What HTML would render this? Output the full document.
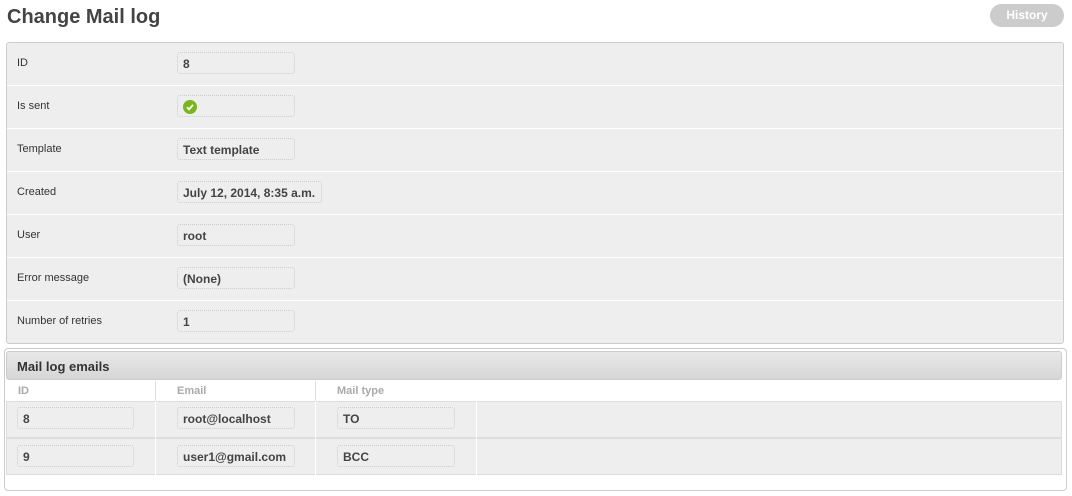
<!DOCTYPE html><html><head><style>
body{margin:0;width:1072px;height:496px;background:#fff;font-family:"Liberation Sans",Arial,sans-serif;position:relative;overflow:hidden;color:#333}
.a{position:absolute}
h1{position:absolute;left:7px;top:6px;margin:0;font-size:20px;font-weight:bold;color:#444}
.hist{left:990px;top:4px;width:74px;height:23px;border-radius:12px;background:#ccc;color:#fff;font-size:12px;font-weight:bold;text-align:center;line-height:23px}
.fs{left:6px;top:42px;width:1056px;height:300px;border:1px solid #ccc;border-radius:3px;background:#eee}
.row{position:absolute;left:0;width:1056px;height:42px;border-bottom:1px solid #fff}
.row .l{position:absolute;left:10px;top:14px;font-size:11px;color:#333}
.box{position:absolute;height:22px;border:1px dotted #ccc;border-radius:3px;font-size:12px;font-weight:bold;color:#444;line-height:22px;padding-left:5px;box-sizing:border-box}
.row .box{left:170px;top:9px;width:118px}
.grp{left:4px;top:348px;width:1061px;height:141px;border:1px solid #ccc;border-radius:4px}
.hd{left:6px;top:351px;width:1056px;height:29px;border:1px solid #ccc;border-radius:3px;background:linear-gradient(#e8e8e8,#d6d6d6);font-size:13px;font-weight:bold;color:#333;line-height:29px;padding-left:10px;box-sizing:border-box}
.ch{font-size:11px;font-weight:bold;color:#aaa;top:385px}
.tr{left:6px;width:1056px;height:37px;background:#eee;border:1px solid #ddd;box-sizing:border-box}
.sep{width:1px;background:#ddd}
</style></head><body>
<h1>Change Mail log</h1>
<div class="a hist">History</div>
<div class="a fs">
<div class="row" style="top:0"><span class="l">ID</span><div class="box">8</div></div>
<div class="row" style="top:43px"><span class="l">Is sent</span><div class="box"><svg width="14" height="14" viewBox="0 0 14 14" style="position:absolute;left:5px;top:4px"><circle cx="7" cy="7" r="7" fill="#7ab51d"/><path d="M4 7.2l2 2.2 4-4.6" stroke="#fff" stroke-width="1.8" fill="none"/></svg></div></div>
<div class="row" style="top:86px"><span class="l">Template</span><div class="box">Text template</div></div>
<div class="row" style="top:129px"><span class="l">Created</span><div class="box" style="width:145px">July 12, 2014, 8:35 a.m.</div></div>
<div class="row" style="top:172px"><span class="l">User</span><div class="box">root</div></div>
<div class="row" style="top:215px"><span class="l">Error message</span><div class="box">(None)</div></div>
<div class="row" style="top:258px;border:0"><span class="l">Number of retries</span><div class="box">1</div></div>
</div>
<div class="a grp"></div>
<div class="a hd">Mail log emails</div>
<div class="a ch" style="left:18px">ID</div>
<div class="a ch" style="left:177px">Email</div>
<div class="a ch" style="left:337px">Mail type</div>
<div class="a sep" style="left:155px;top:381px;height:20px"></div>
<div class="a sep" style="left:315px;top:381px;height:20px"></div>
<div class="a tr" style="top:401px"></div>
<div class="a tr" style="top:438px"></div>
<div class="a sep" style="left:155px;top:401px;height:74px;background:#fff"></div>
<div class="a sep" style="left:315px;top:401px;height:74px;background:#fff"></div>
<div class="a sep" style="left:476px;top:401px;height:74px;background:#fff"></div>
<div class="a box" style="left:17px;top:407px;width:117px">8</div>
<div class="a box" style="left:177px;top:407px;width:118px">root@localhost</div>
<div class="a box" style="left:337px;top:407px;width:118px">TO</div>
<div class="a box" style="left:17px;top:445px;width:117px">9</div>
<div class="a box" style="left:177px;top:445px;width:118px">user1@gmail.com</div>
<div class="a box" style="left:337px;top:445px;width:118px">BCC</div>
</body></html>
